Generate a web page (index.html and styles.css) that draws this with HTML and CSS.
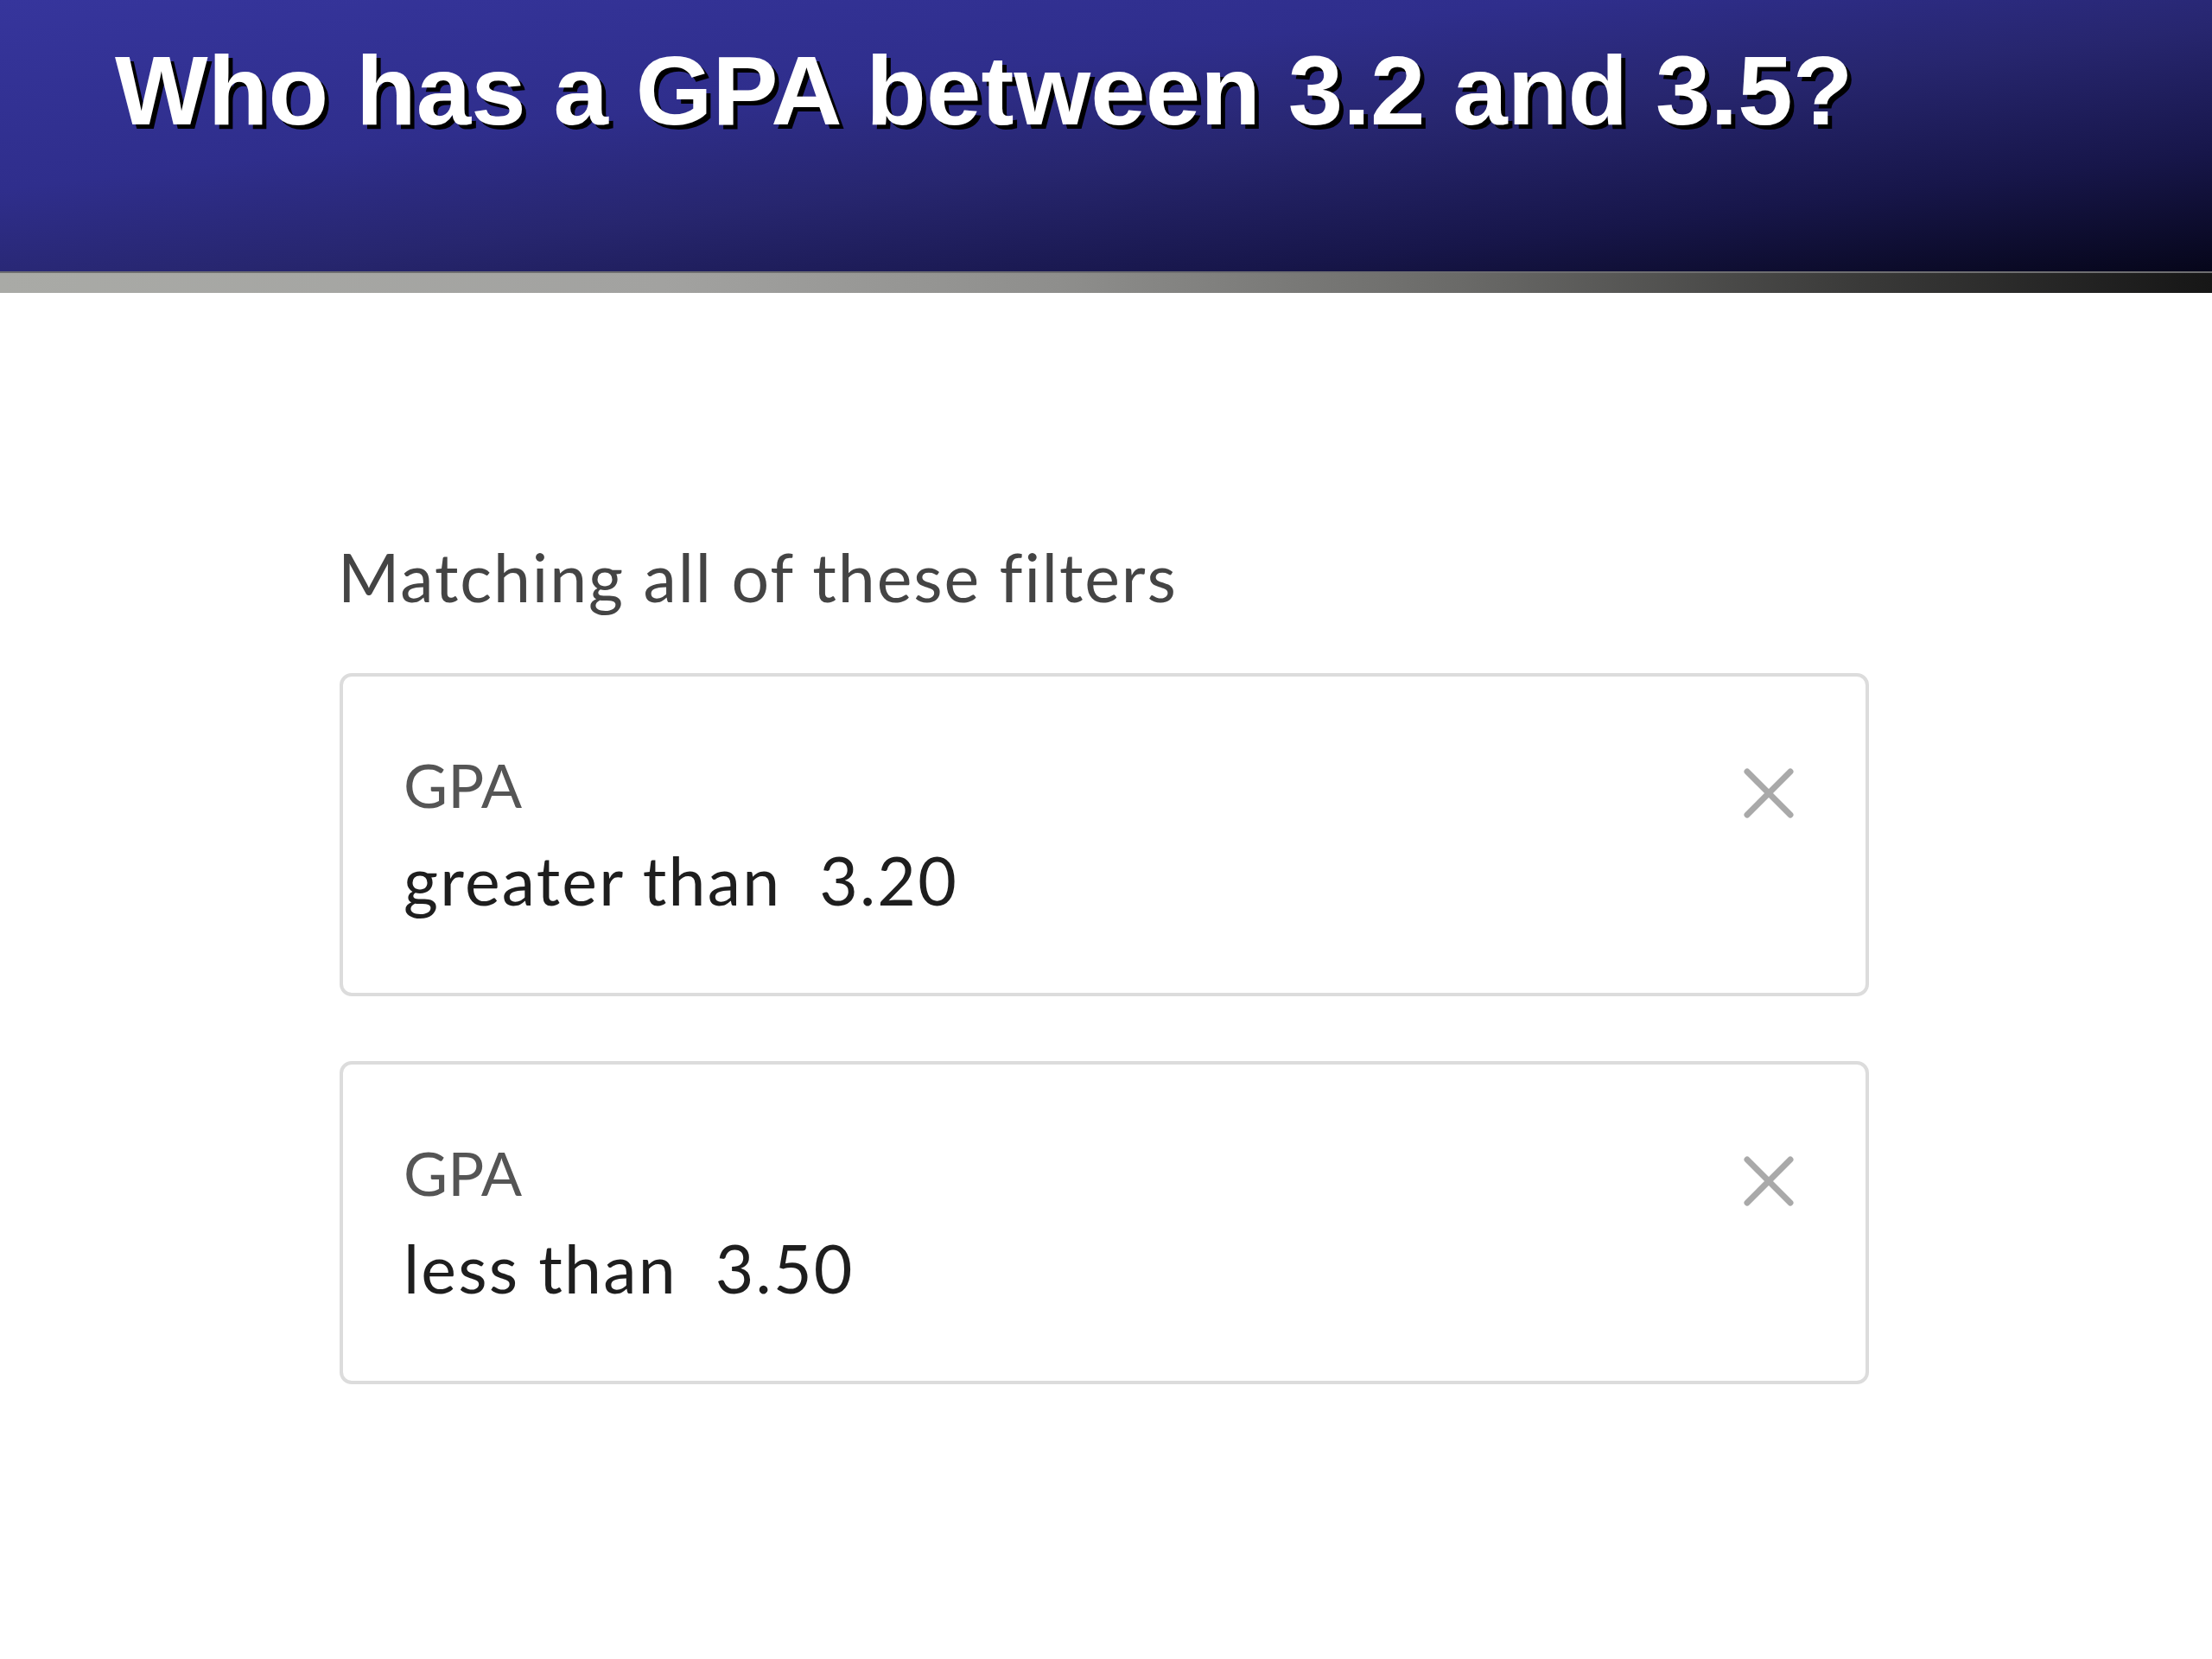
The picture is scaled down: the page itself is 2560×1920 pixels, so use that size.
FILE: index.html
```html
<!DOCTYPE html>
<html lang="en">
<head>
<meta charset="utf-8">
<title>Who has a GPA between 3.2 and 3.5?</title>
<link rel="stylesheet" href="styles.css">
</head>
<body>
<header class="banner">
  <h1 class="banner-title">Who has a GPA between 3.2 and 3.5?</h1>
</header>
<div class="banner-rule"></div>
<main class="content">
  <h2 class="filters-heading">Matching all of these filters</h2>
  <ul class="filter-list">
    <li class="filter-card">
      <div class="filter-text">
        <div class="filter-field">GPA</div>
        <div class="filter-value">greater than&nbsp; 3.20</div>
      </div>
      <svg class="filter-remove" viewBox="0 0 60 60" aria-label="Remove filter">
        <path d="M5 5 L55 55 M55 5 L5 55" stroke="#a9a9a9" stroke-width="7" stroke-linecap="round" fill="none"/>
      </svg>
    </li>
    <li class="filter-card">
      <div class="filter-text">
        <div class="filter-field">GPA</div>
        <div class="filter-value">less than&nbsp; 3.50</div>
      </div>
      <svg class="filter-remove" viewBox="0 0 60 60" aria-label="Remove filter">
        <path d="M5 5 L55 55 M55 5 L5 55" stroke="#a9a9a9" stroke-width="7" stroke-linecap="round" fill="none"/>
      </svg>
    </li>
  </ul>
</main>
</body>
</html>
```
FILE: styles.css
```css
html, body {
  margin: 0;
  padding: 0;
  background: #ffffff;
}

body {
  width: 2560px;
  min-height: 1920px;
  font-family: Lato, "Open Sans", "Liberation Sans", sans-serif;
}

.banner {
  height: 314px;
  box-sizing: border-box;
  padding: 39px 0 0 133px;
  background: linear-gradient(to bottom right, #36359c 0%, #2f2e8c 35%, #27266f 55%, #17164a 78%, #06061a 100%);
}

.banner-title {
  margin: 0;
  font-family: "Liberation Sans", Arial, sans-serif;
  font-weight: 700;
  font-size: 114px;
  line-height: 1.15;
  color: #ffffff;
  text-shadow: 5px 5px 0 #000000;
  letter-spacing: 0.1px;
}

.banner-rule {
  height: 25px;
  box-sizing: border-box;
  border-top: 2px solid #6e6e70;
  background: linear-gradient(to right, #a9aaa6 0%, #a2a2a0 30%, #8e8e8c 48%, #6a6a68 66%, #3a3a39 84%, #161616 100%);
}

.content {
  padding: 282px 0 0 391px;
}

.filters-heading {
  margin: 0;
  font-weight: 400;
  font-size: 77px;
  line-height: 92px;
  color: #444444;
  letter-spacing: 1.9px;
}

.filter-list {
  list-style: none;
  margin: 66px 0 0 2px;
  padding: 0;
  display: flex;
  flex-direction: column;
  gap: 75px;
  width: 1770px;
}

.filter-card {
  box-sizing: border-box;
  height: 374px;
  border: 4px solid #dcdcdc;
  border-radius: 14px;
  padding: 83px 82px 0 70px;
  display: flex;
  justify-content: space-between;
  align-items: flex-start;
}

.filter-field {
  font-size: 70px;
  line-height: 84px;
  color: #555555;
}

.filter-value {
  margin-top: 22px;
  font-size: 77px;
  line-height: 92px;
  color: #1e1e1e;
  white-space: pre;
  letter-spacing: 2.2px;
}

.filter-remove {
  width: 60px;
  height: 60px;
  margin-top: 22px;
  flex: none;
}
```
